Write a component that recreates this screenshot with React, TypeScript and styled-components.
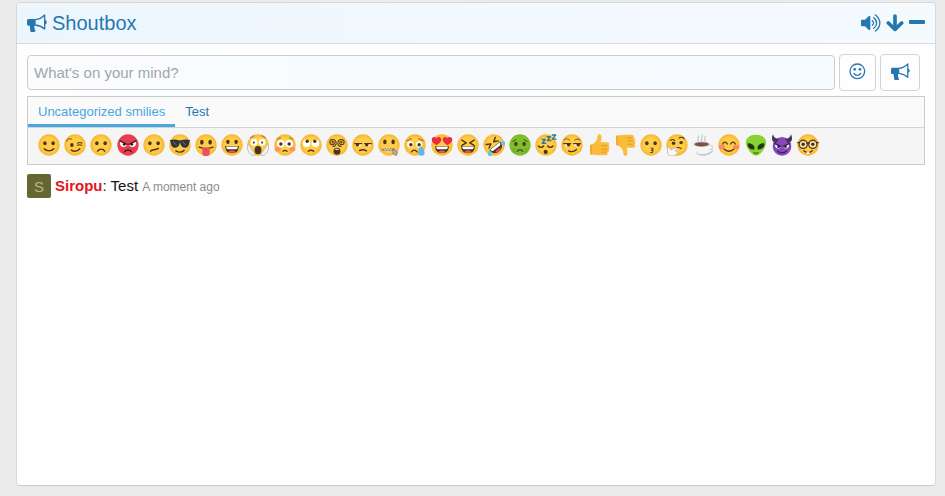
import React from "react";
import styled, { createGlobalStyle } from "styled-components";

const GlobalStyle = createGlobalStyle`
  * { box-sizing: border-box; }
  body {
    margin: 0;
    background: #ebebeb;
    color: #141414;
    font-family: "Liberation Sans", Arial, sans-serif;
    font-size: 15px;
    line-height: 21px;
  }
  button, input { font-family: inherit; }
`;

const Page = styled.main`
  display: flex;
  min-height: 100vh;
  padding: 2px 9px 10px 16px;
`;

const Block = styled.section`
  flex: 1;
  min-width: 0;
  background: #fefefe;
  border: 1px solid #d8d8d8;
  border-bottom-color: #c8c8c8;
  border-radius: 4px;
`;

const Header = styled.header`
  display: flex;
  align-items: center;
  justify-content: space-between;
  height: 41px;
  padding: 0 10px;
  color: #2577b1;
  background: linear-gradient(to right, #edf6fd, #f5faff);
  border-bottom: 1px solid #d5dbe2;
  border-radius: 3px 3px 0 0;
`;

const Title = styled.h1`
  display: flex;
  align-items: center;
  gap: 5px;
  margin: 0;
  font-size: 20px;
  font-weight: 400;
  line-height: 28px;
`;

const Actions = styled.div`
  display: flex;
  align-items: center;
  gap: 5px;
`;

const IconButton = styled.button`
  display: flex;
  padding: 0;
  border: 0;
  background: none;
  color: inherit;
  cursor: pointer;
`;

const Body = styled.div`
  padding: 10px;
`;

const Composer = styled.form`
  display: flex;
  align-items: center;
  gap: 4px;
  padding-right: 5px;
`;

const MessageInput = styled.input`
  flex: 1;
  min-width: 0;
  height: 35px;
  padding: 0 6px;
  border: 1px solid #c9cdd0;
  border-radius: 4px;
  background: linear-gradient(to right, #fafcfe, #f6fbff);
  color: #141414;
  font-size: 15px;
  &::placeholder { color: #a3a6a8; opacity: 1; }
`;

const ToolButton = styled.button<{ $wide?: boolean }>`
  display: flex;
  align-items: center;
  justify-content: center;
  width: ${(p) => (p.$wide ? 40 : 37)}px;
  height: 37px;
  padding: 0 0 2px;
  border: 1px solid #d3d3d3;
  border-radius: 4px;
  background: #fefefe;
  color: #2577b1;
  cursor: pointer;
`;

const SmiliePanel = styled.div`
  margin-top: 5px;
  border: 1px solid #cbcbcb;
  background: #f5f5f5;
`;

const Tabs = styled.div`
  display: flex;
  background: #fafafa;
  border-bottom: 1px solid #d3d3d3;
`;

const Tab = styled.button<{ $active?: boolean }>`
  height: 30px;
  padding: 2px 10px 0;
  border: 0;
  border-bottom: 3px solid ${(p) => (p.$active ? "#47a7e0" : "transparent")};
  background: none;
  color: ${(p) => (p.$active ? "#47a7e0" : "#2577b1")};
  font-size: 13px;
  cursor: pointer;
`;

const SmilieList = styled.div`
  padding: 3px 10px 7px;
  line-height: 26px;
`;

const SmilieButton = styled.button`
  display: inline-block;
  width: 22px;
  height: 22px;
  padding: 0;
  border: 0;
  background: none;
  vertical-align: middle;
  cursor: pointer;
  svg { display: block; width: 22px; height: 22px; }
`;

const Message = styled.article`
  display: flex;
  align-items: center;
  gap: 4px;
  margin-top: 9px;
`;

const Avatar = styled.a`
  display: flex;
  align-items: center;
  justify-content: center;
  width: 24px;
  height: 24px;
  border-radius: 2px;
  background: #666633;
  color: #b8b87a;
  font-size: 15px;
  text-decoration: none;
`;

const MessageText = styled.p`
  margin: 0;
`;

const Username = styled.a`
  color: #e6141a;
  font-weight: 700;
  text-decoration: none;
`;

const Time = styled.time`
  color: #8c8c8c;
  font-size: 12px;
`;

const Bullhorn = ({ width }: { width: number }) => (
  <svg width={width} viewBox="0 0 60 54" fill="currentColor" aria-hidden="true">
    <path d="M5 15h21v20h-4c0 6 0 10 3 14 1 3-1 5-4 5h-7c-3 0-4-1-4-4L8 35H5c-3 0-5-2-5-5V20c0-3 2-5 5-5z" />
    <path d="M25 17C36 16 45 11 53 3v42c-8-7-17-11-28-12" fill="none" stroke="currentColor" strokeWidth="4" strokeLinejoin="round" />
    <path d="M54 18c7 1 7 12 0 13z" />
  </svg>
);

const Volume = () => (
  <svg width="20" height="18" viewBox="0 0 60 54" fill="currentColor" aria-hidden="true">
    <path d="M3 17h9L23 7c2-2 5-1 5 2v36c0 3-3 4-5 2L12 37H3c-2 0-3-1-3-3V20c0-2 1-3 3-3z" />
    <path d="M34 20c5 4 5 10 0 14M38 11c12 9 12 23 0 32M43 3c18 13 18 35 0 48" fill="none" stroke="currentColor" strokeWidth="4" strokeLinecap="round" />
  </svg>
);

const ArrowDown = () => (
  <svg width="18" height="18" viewBox="0 0 54 54" fill="none" stroke="currentColor" strokeLinecap="round" strokeLinejoin="round" aria-hidden="true">
    <path d="M27 6v38" strokeWidth="11" />
    <path d="M7 27l20 19 20-19" strokeWidth="11" />
  </svg>
);

const Minus = () => (
  <svg width="16" height="16" viewBox="0 0 16 16" fill="currentColor" aria-hidden="true">
    <rect y="5" width="16" height="4" rx="1" />
  </svg>
);

const SmileOutline = () => (
  <svg width="17" height="17" viewBox="0 0 51 51" fill="none" stroke="currentColor" strokeWidth="4" strokeLinecap="round" aria-hidden="true">
    <circle cx="25" cy="25" r="22" />
    <path d="M15 31c5 8 15 8 20 0" />
    <g fill="currentColor" stroke="none"><circle cx="17" cy="19" r="4" /><circle cx="33" cy="19" r="4" /></g>
  </svg>
);

const INK = "#4b3418";

const Disc = ({ fill = "url(#skin)" }: { fill?: string }) => <circle cx="32" cy="32" r="31" fill={fill} />;

const Eyes = ({ y = 27, rx = 5, ry = 6 }: { y?: number; rx?: number; ry?: number }) => (
  <g fill={INK}>
    <ellipse cx="20" cy={y} rx={rx} ry={ry} />
    <ellipse cx="44" cy={y} rx={rx} ry={ry} />
  </g>
);

const Line = ({ d, w = 4, color = INK }: { d: string; w?: number; color?: string }) => (
  <path d={d} fill="none" stroke={color} strokeWidth={w} strokeLinecap="round" strokeLinejoin="round" />
);

const BigGrin = () => (
  <>
    <path d="M12 35h40c0 14-8 21-20 21s-20-7-20-21z" fill={INK} />
    <path d="M15 36h34c0 5-2 8-5 8H20c-3 0-5-3-5-8z" fill="#fff" />
    <path d="M22 52c4-5 16-5 20 0-6 4-14 4-20 0z" fill="#ef5261" />
  </>
);

const Heart = ({ x }: { x: number }) => (
  <path transform={`translate(${x} 8)`} d="M14 25C6 19 0 15 0 8c0-8 10-10 14-3 4-7 14-5 14 3 0 7-6 11-14 17z" fill="#ef2940" />
);

const Thumb = () => (
  <>
    <path d="M6 32c9-1 17-9 20-17l2-11c1-5 10-4 11 2 1 6-1 13-2 18h18c8 0 8 8 4 10 5 2 4 9 0 10 4 3 2 9-2 9 2 5-1 9-6 9H28c-7 0-13-3-22-3z" fill="#fbbb3b" />
    <Line d="M40 34h15M40 44h15M40 53h11" w={2} color="#d18d21" />
    <path d="M6 32l6-2v30l-6-1z" fill="#f0aa2c" />
  </>
);

const smilies: { name: string; art: React.ReactNode }[] = [
  { name: "Smile", art: <><Disc /><Eyes /><Line d="M18 43c7 8 21 8 28 0" /></> },
  { name: "Wink", art: <><Disc /><ellipse cx="23" cy="32" rx="5" ry="6" fill={INK} /><Line d="M39 27c5-3 9-3 13 0M39 33c5-2 9-2 13 0" w={3} /><Line d="M7 21c3-7 9-9 16-6" w={3} color="#a26b20" /><Line d="M21 47c9 5 19 3 25-4" /></> },
  { name: "Frown", art: <><Disc /><Eyes /><Line d="M22 50c5-8 16-8 21 0" /></> },
  { name: "Mad", art: <><Disc fill="#e83e50" /><path d="M9 21l20 9c-1 10-18 11-20 0zM55 21l-20 9c1 10 18 11 20 0z" fill="#fff" /><circle cx="21" cy="30" r="4" fill="#241b17" /><circle cx="43" cy="30" r="4" fill="#241b17" /><Line d="M9 20l20 10M55 20l-20 10M22 52c5-8 15-8 20 0" color="#461a1c" /></> },
  { name: "Confused", art: <><Disc /><Eyes /><Line d="M22 50c5-6 12-2 23-8" /></> },
  { name: "Cool", art: <><Disc /><path d="M2 18c10-4 20-2 30 1 10-3 20-5 30-1l-3 5c-1 13-6 17-14 17-7 0-11-7-13-16-2 9-6 16-13 16-8 0-13-4-14-17z" fill="#30343a" /><Line d="M12 23l9 8M39 23l9 8" w={2} color="#8b939b" /><Line d="M20 49c8 5 18 4 24-2" /></> },
  { name: "Stick out tongue", art: <><Disc /><Eyes y={24} ry={7} /><Line d="M12 38c11 5 29 5 40 0" /><path d="M21 41h22v14c0 13-22 13-22 0z" fill="#ef5261" /><Line d="M32 42v10" w={2} color="#c63d4c" /></> },
  { name: "Big grin", art: <><Disc /><Eyes y={23} ry={6} /><BigGrin /></> },
  { name: "Eek!", art: <><Disc /><circle cx="20" cy="24" r="10" fill="#fff" /><circle cx="44" cy="24" r="10" fill="#fff" /><Eyes y={25} rx={3} ry={3} /><Line d="M10 11l10-6M44 5l10 6" w={3} color="#b47724" /><ellipse cx="32" cy="47" rx="10" ry="12" fill={INK} /><path d="M1 33c3-4 6-1 8 4l12 18c3 5 1 8-3 8C7 60 0 47 1 33zM63 33c-3-4-6-1-8 4L43 55c-3 5-1 8 3 8 11-3 18-16 17-30z" fill="#f1f1f1" stroke="#aaa" strokeWidth="2" /></> },
  { name: "Oops!", art: <><Disc /><ellipse cx="11" cy="44" rx="9" ry="7" fill="#fa9858" /><ellipse cx="53" cy="44" rx="9" ry="7" fill="#fa9858" /><circle cx="20" cy="28" r="11" fill="#fff" /><circle cx="44" cy="28" r="11" fill="#fff" /><Eyes y={29} rx={5} ry={5} /><Line d="M9 15l10-4M45 11l10 4" w={3} color="#b47724" /><Line d="M26 50c4-3 8-3 12 0" /></> },
  { name: "Roll eyes", art: <><Disc /><circle cx="19" cy="27" r="11" fill="#fff" /><circle cx="45" cy="27" r="11" fill="#fff" /><circle cx="21" cy="21" r="5" fill={INK} /><circle cx="43" cy="21" r="5" fill={INK} /><Line d="M24 50c4-3 11-3 16 0" /></> },
  { name: "Er... what?", art: <><Disc /><Line d="M19 26c-2 0-3-4 1-4 6 0 6 9-1 9-10 0-11-14 0-15 13 0 15 20 1 20M45 26c2 0 3-4-1-4-6 0-6 9 1 9 10 0 11-14 0-15-13 0-15 20-1 20" w={3} /><ellipse cx="32" cy="50" rx="10" ry="10" fill={INK} /><path d="M27 43h10v3H27z" fill="#fff" /></> },
  { name: "Unamused", art: <><Disc /><path d="M9 28h20c-1 10-17 11-20 0zM36 28h20c-3 11-19 10-20 0z" fill="#fff" /><Line d="M8 28h20M37 28h19M22 48c7-3 14-3 20 1" /><circle cx="16" cy="31" r="5" fill={INK} /><circle cx="43" cy="31" r="5" fill={INK} /></> },
  { name: "Zipped lips", art: <><Disc /><Eyes y={23} ry={7} /><Line d="M14 45h32" w={7} color="#8d7c62" /><Line d="M13 45l4-4 4 7 4-7 4 7 4-7 4 7 4-5" w={2} color="#eee" /><path d="M43 43l14 9-4 11-10-6z" fill="#b9a795" stroke="#8a7667" strokeWidth="2" /></> },
  { name: "Cry", art: <><Disc /><circle cx="18" cy="30" r="9" fill="#fff" /><circle cx="44" cy="30" r="9" fill="#fff" /><Eyes y={31} rx={5} ry={5} /><Line d="M8 20l13-6M43 14l13 6" w={3} color="#9b681f" /><Line d="M22 52c4-7 11-7 16 0" /><path d="M50 35c12 13 14 28 1 28s-13-14-1-28z" fill="#5eb7e8" /></> },
  { name: "Love", art: <><Disc /><BigGrin /><Heart x={2} /><Heart x={34} /></> },
  { name: "Laugh", art: <><Disc /><Line d="M14 18l13 8-13 7M50 18l-13 8 13 7" /><BigGrin /></> },
  { name: "ROFLMAO", art: <g transform="rotate(-38 32 32)"><Disc /><Line d="M15 17l12 7-12 6M49 17l-12 7 12 6" /><BigGrin /><path d="M12 36C1 38-3 47 4 51s13-4 8-15zM52 36c11 2 15 11 8 15s-13-4-8-15z" fill="#67c3ee" /></g> },
  { name: "Sick", art: <><Disc fill="#7fbd2c" /><Eyes y={29} /><Line d="M11 21c4 0 7-2 9-5M44 16c2 3 5 5 9 5" w={3} color="#437018" /><Line d="M23 51c5-7 13-7 18 0" w={4} color="#40651b" /><Line d="M15 42c-3 5-3 9 0 13M49 42c3 5 3 9 0 13" w={2} color="#5c8f22" /></> },
  { name: "Sleep", art: <><Disc /><Line d="M10 35c4 5 11 5 15 0M37 35c4 5 11 5 15 0" /><ellipse cx="31" cy="52" rx="6" ry="6" fill={INK} /><Line d="M21 16h9l-9 11h10M35 8h9l-8 11h10M50 3h10l-9 12h10" w={4} color="#2c7894" /></> },
  { name: "Sneaky", art: <><Disc /><path d="M9 28h19c-1 10-16 11-19 0zM37 28h19c-3 11-18 10-19 0z" fill="#fff" /><Line d="M8 28h20M37 28h19M22 49c8 4 17 2 23-4" /><Line d="M9 17c5-4 11-4 16 1M40 18c5-4 10-4 15 0" w={3} color="#a26b20" /><circle cx="22" cy="31" r="5" fill={INK} /><circle cx="50" cy="31" r="5" fill={INK} /></> },
  { name: "Thumbs up", art: <Thumb /> },
  { name: "Thumbs down", art: <g transform="translate(0 64) scale(1 -1)"><Thumb /></g> },
  { name: "Kiss", art: <><Disc /><Eyes /><Line d="M32 41c9 0 7 6 1 6 7 0 6 8-2 7" w={3} /></> },
  { name: "Thinking", art: <><Disc /><circle cx="22" cy="27" r="5" fill={INK} /><circle cx="44" cy="25" r="5" fill={INK} /><Line d="M13 19c4-4 8-4 13 0M38 12c5-4 12-3 15 2M27 42c6-4 12-3 17 0" w={3} /><path d="M4 37c5-1 6 5 10 9l15-6c6-1 6 5 1 7l-5 2c8-1 10 4 6 9-6 9-24 8-26-2z" fill="#fafafa" stroke="#aaa" strokeWidth="2" /></> },
  { name: "Coffee", art: <><path d="M10 50c12 12 39 10 52-6 0 12-17 19-31 19-11 0-20-6-21-13z" fill="#c4cbce" /><path d="M3 30h50c0 20-9 28-25 28S3 49 3 30z" fill="#f4f5f5" /><path d="M52 34c13-3 11 13-3 12" fill="none" stroke="#d5d9db" strokeWidth="4" /><ellipse cx="28" cy="30" rx="25" ry="8" fill="#d3d7d9" /><ellipse cx="28" cy="30" rx="21" ry="6" fill="#7b5144" /><Line d="M19 21c-7-6 3-9-1-15M29 21c-7-7 4-11 0-18M39 21c-7-6 3-9-1-15" w={3} color="#b3c1c8" /></> },
  { name: "Blush", art: <><Disc /><ellipse cx="11" cy="38" rx="9" ry="7" fill="#fa8a68" /><ellipse cx="53" cy="38" rx="9" ry="7" fill="#fa8a68" /><Line d="M14 29c3-7 9-7 13 0M37 29c4-7 10-7 13 0M18 44c7 8 21 8 28 0" /></> },
  { name: "Alien", art: <><path d="M32 2c21 0 32 13 29 27-3 15-18 34-29 34S6 44 3 29C0 15 11 2 32 2z" fill="#87d32f" /><path d="M8 27c13 0 22 7 19 18-12 1-21-6-19-18zM56 27c-13 0-22 7-19 18 12 1 21-6 19-18z" fill="#26331d" /><Line d="M26 54c4 3 8 3 12 0" w={3} color="#365a19" /></> },
  { name: "Devil", art: <><circle cx="32" cy="36" r="27" fill="#8748bc" /><path d="M6 1c-7 14-2 24 9 25l8-12C16 15 8 11 6 1zM58 1c7 14 2 24-9 25l-8-12c7 1 15-3 17-13z" fill="#45315c" /><path d="M12 28l16 8c-1 9-15 8-16-1zM52 28l-16 8c1 9 15 8 16-1z" fill="#fff" /><Line d="M11 28l17 8M53 28l-17 8M19 50c8 6 18 6 26 0" color="#35204e" /><circle cx="22" cy="37" r="4" fill="#35204e" /><circle cx="42" cy="37" r="4" fill="#35204e" /></> },
  { name: "Geek", art: <><Disc /><circle cx="18" cy="30" r="12" fill="#fbe6b0" stroke="#55402b" strokeWidth="4" /><circle cx="46" cy="30" r="12" fill="#fbe6b0" stroke="#55402b" strokeWidth="4" /><Line d="M29 27c2-2 4-2 6 0M2 25h5M57 25h5" /><circle cx="18" cy="30" r="5" fill={INK} /><circle cx="46" cy="30" r="5" fill={INK} /><Line d="M20 49c8 7 17 7 24 0" /><path d="M28 52h8v6h-8z" fill="#fff" /></> },
];

export default function App() {
  return (
    <Page>
      <GlobalStyle />
      <svg width="0" height="0" aria-hidden="true">
        <defs>
          <radialGradient id="skin">
            <stop offset="65%" stopColor="#ffcd48" />
            <stop offset="100%" stopColor="#f6b630" />
          </radialGradient>
        </defs>
      </svg>
      <Block>
        <Header>
          <Title><Bullhorn width={20} />Shoutbox</Title>
          <Actions>
            <IconButton type="button" aria-label="Toggle sound"><Volume /></IconButton>
            <IconButton type="button" aria-label="Reverse order"><ArrowDown /></IconButton>
            <IconButton type="button" aria-label="Collapse"><Minus /></IconButton>
          </Actions>
        </Header>
        <Body>
          <Composer onSubmit={(e) => e.preventDefault()}>
            <MessageInput type="text" aria-label="Message" placeholder="What's on your mind?" />
            <ToolButton type="button" aria-label="Smilies"><SmileOutline /></ToolButton>
            <ToolButton type="submit" aria-label="Shout" $wide><Bullhorn width={19} /></ToolButton>
          </Composer>
          <SmiliePanel>
            <Tabs role="tablist">
              <Tab type="button" role="tab" aria-selected="true" $active>Uncategorized smilies</Tab>
              <Tab type="button" role="tab" aria-selected="false">Test</Tab>
            </Tabs>
            <SmilieList>
              {smilies.map(({ name, art }) => (
                <React.Fragment key={name}>
                  <SmilieButton type="button" aria-label={name}>
                    <svg viewBox="0 0 64 64" aria-hidden="true">{art}</svg>
                  </SmilieButton>{" "}
                </React.Fragment>
              ))}
            </SmilieList>
          </SmiliePanel>
          <Message>
            <Avatar href="#siropu" aria-label="Siropu">S</Avatar>
            <MessageText>
              <Username href="#siropu">Siropu</Username>: Test <Time>A moment ago</Time>
            </MessageText>
          </Message>
        </Body>
      </Block>
    </Page>
  );
}
